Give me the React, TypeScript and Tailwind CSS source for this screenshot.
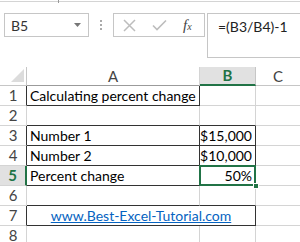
import React from 'react';

const FONT = "font-['Lato','Liberation_Sans',sans-serif]";

function RowHead({ n, active, dark }: { n: number; active?: boolean; dark?: boolean }) {
  let cls = 'border-r border-b border-[#d4d4d4] text-[#444]';
  if (dark) cls = 'border-r border-b border-b-[#d4d4d4] border-r-[#333] text-[#444]';
  if (active) cls = 'border-r-2 border-b border-b-[#d4d4d4] border-r-[#217346] bg-[#e1e1e1] text-[#217346] font-bold';
  return <div className={`flex items-center justify-center text-[15px] ${cls}`}>{n}</div>;
}

export default function App() {
  return (
    <div className={`w-[300px] h-[242px] overflow-hidden bg-white ${FONT}`}>
      {/* formula bar area */}
      <div className="relative h-[66px] border-t border-[#d4d4d4] mt-[1px]">
        <div className="absolute left-[58px] -top-[2px] w-px h-[3px] bg-[#999]" />
        <div className="flex items-start pt-[11px] pl-[4px]">
          <div className="w-[85px] h-[24px] border border-[#c6c6c6] flex items-center justify-between pl-[6px] pr-[7px] text-[14px] text-[#333]">
            <span>B5</span>
            <svg width="7" height="4" viewBox="0 0 7 4"><polygon points="0,0 7,0 3.5,4" fill="#777" /></svg>
          </div>
          <div className="w-[24px] h-[24px] flex flex-col items-center justify-center gap-[2px]">
            <span className="w-[2px] h-[2px] bg-[#aaa]" />
            <span className="w-[2px] h-[2px] bg-[#aaa]" />
            <span className="w-[2px] h-[2px] bg-[#aaa]" />
          </div>
          <div className="w-[92px] h-[24px] border border-[#c6c6c6] flex items-center pl-[9px] gap-[16px]">
            <svg width="13" height="13" viewBox="0 0 13 13"><path d="M1 1 L12 12 M12 1 L1 12" stroke="#bdbdbd" strokeWidth="1.5" /></svg>
            <svg width="15" height="12" viewBox="0 0 15 12"><path d="M1 6.5 L5 10.5 L14 1.5" stroke="#bdbdbd" strokeWidth="1.6" fill="none" /></svg>
            <span className="font-['Liberation_Serif',serif] italic text-[15px] text-[#444] leading-none">f<span className="text-[10px]">x</span></span>
          </div>
          <div className="ml-[2px] flex-1 h-[45px] border border-r-0 border-[#c6c6c6] pl-[10px] pt-[2px] text-[14px] text-[#222]">
            =(B3/B4)-1
          </div>
        </div>
      </div>

      {/* sheet */}
      <div className="grid grid-cols-[27px_173px_56px_44px] grid-rows-[19px_repeat(8,20px)] text-[14px] text-black whitespace-nowrap">
        {/* header row */}
        <div className="border-r border-b border-[#c6c6c6] flex items-end justify-end pr-[2px] pb-[3px]">
          <svg width="13" height="13" viewBox="0 0 13 13"><polygon points="13,0 13,13 0,13" fill="#dcdcdc" /></svg>
        </div>
        <div className="border-r border-b border-r-[#d4d4d4] border-b-[#9b9b9b] flex items-center justify-center text-[15px] text-[#444]">A</div>
        <div className="border-r border-b-2 border-r-[#c6c6c6] border-b-[#217346] bg-[#e1e1e1] flex items-center justify-center text-[15px] text-[#217346] font-bold">B</div>
        <div className="border-b border-[#c6c6c6] flex items-center justify-center text-[15px] text-[#444]">C</div>

        {/* row 1 */}
        <RowHead n={1} dark />
        <div className="border-r border-b border-[#333] flex items-center pl-[3px]">Calculating percent change</div>
        <div className="border-r border-b border-[#d4d4d4]" />
        <div className="border-b border-[#d4d4d4]" />

        {/* row 2 */}
        <RowHead n={2} />
        <div className="border-r border-b border-r-[#d4d4d4] border-b-[#333]" />
        <div className="border-r border-b border-r-[#d4d4d4] border-b-[#333]" />
        <div className="border-b border-[#d4d4d4]" />

        {/* row 3 */}
        <RowHead n={3} dark />
        <div className="border-r border-b border-[#333] flex items-center pl-[3px]">Number 1</div>
        <div className="border-r border-b border-[#333] flex items-center justify-end pr-[3px]">$15,000</div>
        <div className="border-b border-[#d4d4d4]" />

        {/* row 4 */}
        <RowHead n={4} dark />
        <div className="border-r border-b border-[#333] flex items-center pl-[3px]">Number 2</div>
        <div className="border-r border-b border-[#333] flex items-center justify-end pr-[3px]">$10,000</div>
        <div className="border-b border-[#d4d4d4]" />

        {/* row 5 */}
        <RowHead n={5} active />
        <div className="border-r border-b border-[#333] flex items-center pl-[3px]">Percent change</div>
        <div className="relative border-r border-b border-[#333] flex items-center justify-end pr-[3px]">
          50%
          <div className="absolute -left-[1px] -top-[1px] -right-[1px] -bottom-[1px] border-2 border-[#217346]" />
          <div className="absolute -right-[4px] -bottom-[4px] w-[6px] h-[6px] bg-[#217346] border border-white" />
        </div>
        <div className="border-b border-[#d4d4d4]" />

        {/* row 6 */}
        <RowHead n={6} />
        <div className="border-r border-b border-r-[#d4d4d4] border-b-[#333]" />
        <div className="border-r border-b border-r-[#d4d4d4] border-b-[#333]" />
        <div className="border-b border-[#d4d4d4]" />

        {/* row 7 */}
        <RowHead n={7} dark />
        <div className="col-span-2 border-r border-b border-[#333] flex items-center justify-center">
          <span className="text-[#0563c1] underline">www.Best-Excel-Tutorial.com</span>
        </div>
        <div className="border-b border-[#d4d4d4]" />

        {/* row 8 */}
        <RowHead n={8} />
        <div className="border-r border-b border-[#d4d4d4]" />
        <div className="border-r border-b border-[#d4d4d4]" />
        <div className="border-b border-[#d4d4d4]" />
      </div>
    </div>
  );
}
